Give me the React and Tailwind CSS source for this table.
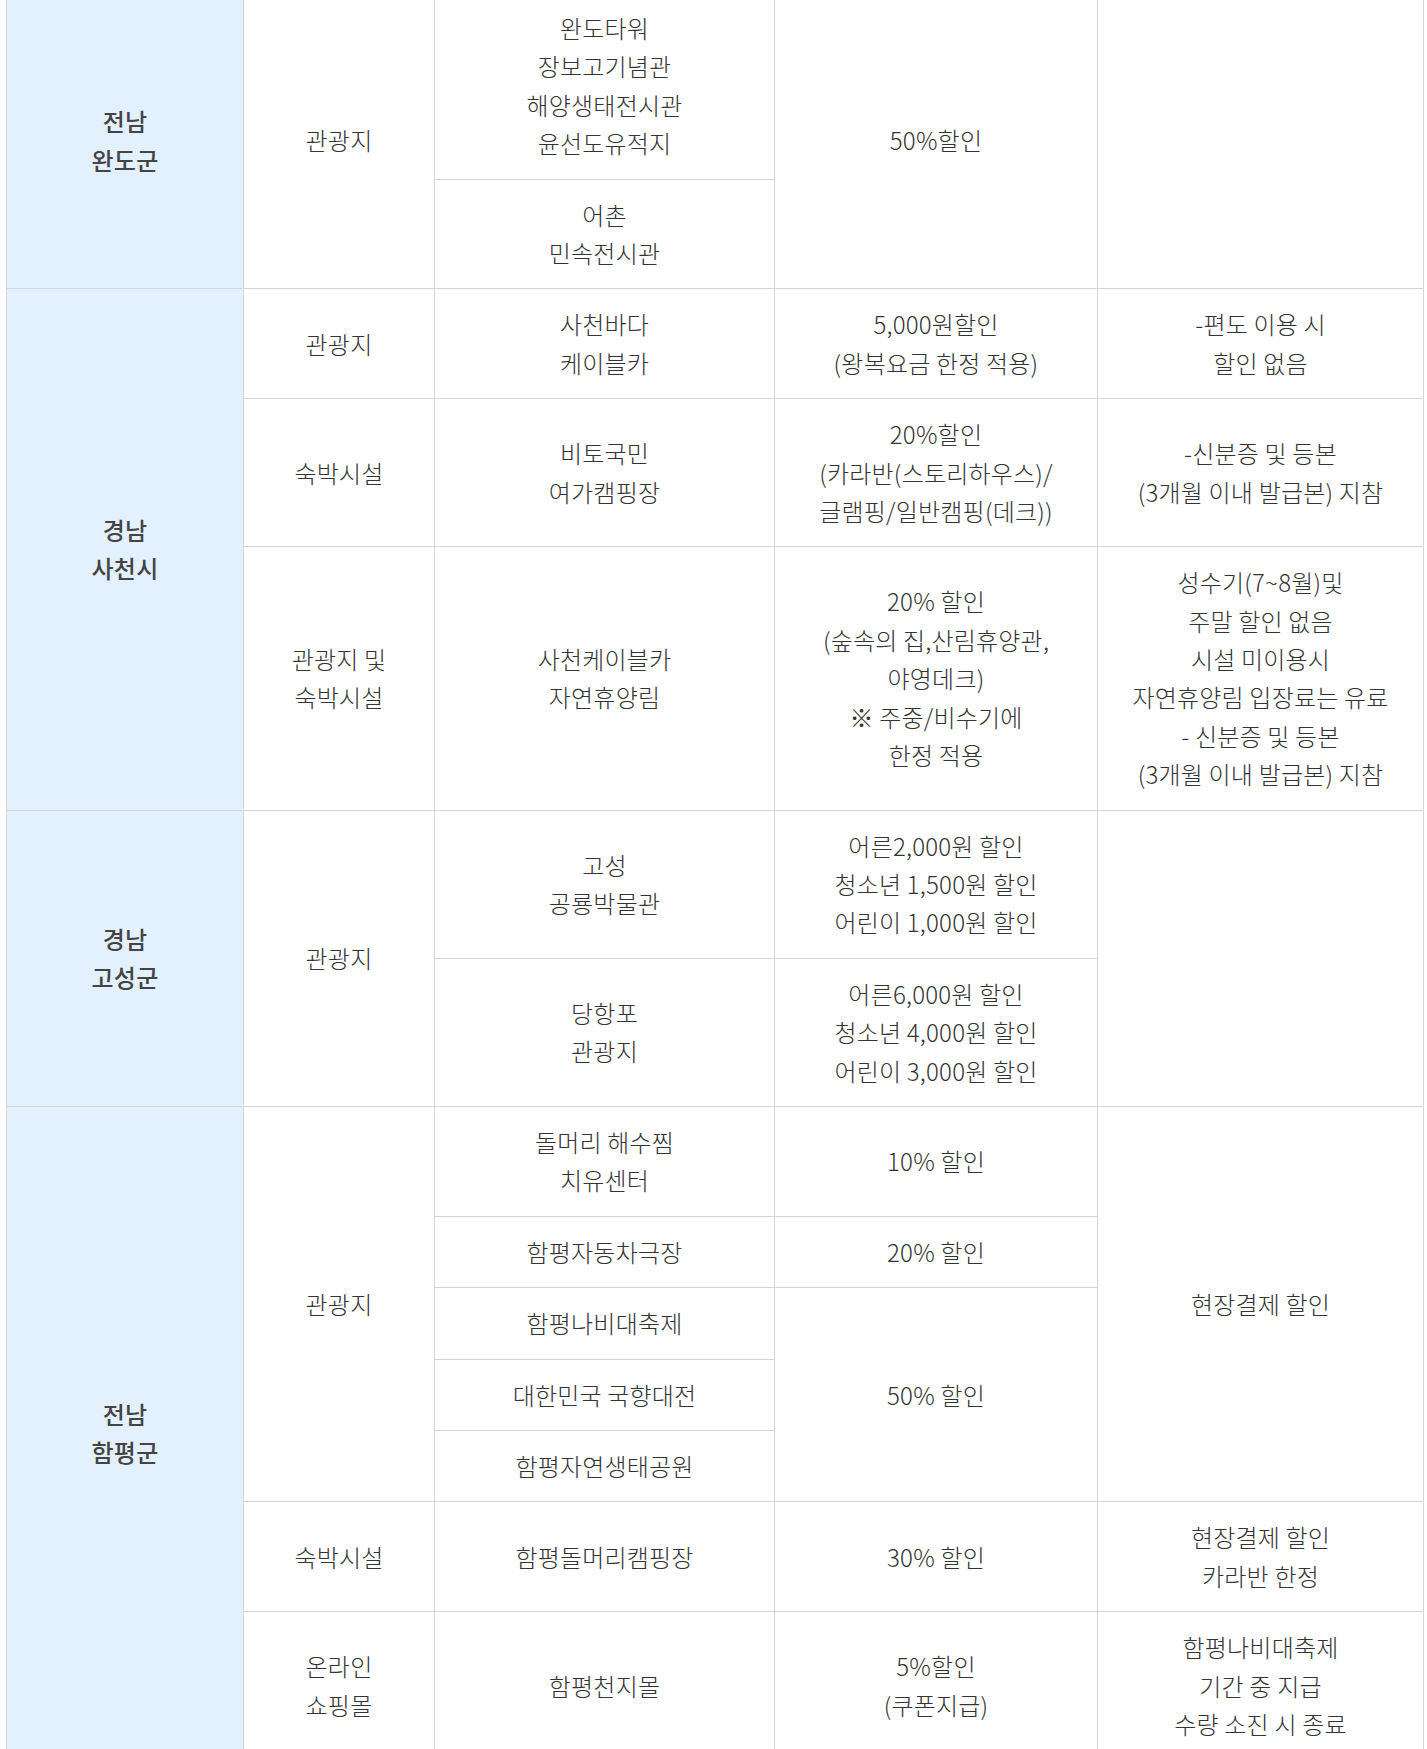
import React from 'react';

// Partner discount table (region / category / place / benefit / note)
const td = 'border border-[#d5d5d5] px-3 py-4 text-center align-middle';
const th = 'border border-[#d5d5d5] bg-[#e3f0fd] px-3 py-4 text-center align-middle font-medium text-[#444]';

const Lines = ({ items }) => (
    <>
        {items.map((line, i) => (
            <React.Fragment key={i}>
                {i > 0 && <br />}
                {line}
            </React.Fragment>
        ))}
    </>
);

const Cell = ({ lines, rowSpan }) => (
    <td className={td} rowSpan={rowSpan}>
        {lines && <Lines items={lines} />}
    </td>
);

const Region = ({ lines, rowSpan }) => (
    <th className={th} rowSpan={rowSpan} scope="row">
        <Lines items={lines} />
    </th>
);

export default function App() {
    return (
        <div className="bg-white min-h-screen overflow-hidden">
            <div className="-mt-[8px] ml-[6px] w-[1417px]">
                <table
                    className="w-full table-fixed border-collapse text-[24px] leading-[1.6] font-light text-[#333] tracking-[0.2px]"
                    style={{ fontFamily: '"Noto Sans CJK KR", "Noto Sans", sans-serif' }}
                >
                    <colgroup>
                        <col className="w-[237px]" />
                        <col className="w-[191px]" />
                        <col className="w-[340px]" />
                        <col className="w-[323px]" />
                        <col className="w-[326px]" />
                    </colgroup>
                    <tbody>
                        {/* 전남 완도군 */}
                        <tr>
                            <Region lines={['전남', '완도군']} rowSpan={2} />
                            <Cell lines={['관광지']} rowSpan={2} />
                            <Cell lines={['완도타워', '장보고기념관', '해양생태전시관', '윤선도유적지']} />
                            <Cell lines={['50%할인']} rowSpan={2} />
                            <Cell rowSpan={2} />
                        </tr>
                        <tr>
                            <Cell lines={['어촌', '민속전시관']} />
                        </tr>

                        {/* 경남 사천시 */}
                        <tr>
                            <Region lines={['경남', '사천시']} rowSpan={3} />
                            <Cell lines={['관광지']} />
                            <Cell lines={['사천바다', '케이블카']} />
                            <Cell lines={['5,000원할인', '(왕복요금 한정 적용)']} />
                            <Cell lines={['-편도 이용 시', '할인 없음']} />
                        </tr>
                        <tr>
                            <Cell lines={['숙박시설']} />
                            <Cell lines={['비토국민', '여가캠핑장']} />
                            <Cell lines={['20%할인', '(카라반(스토리하우스)/', '글램핑/일반캠핑(데크))']} />
                            <Cell lines={['-신분증 및 등본', '(3개월 이내 발급본) 지참']} />
                        </tr>
                        <tr>
                            <Cell lines={['관광지 및', '숙박시설']} />
                            <Cell lines={['사천케이블카', '자연휴양림']} />
                            <Cell lines={['20% 할인', '(숲속의 집,산림휴양관,', '야영데크)', '※ 주중/비수기에', '한정 적용']} />
                            <Cell
                                lines={[
                                    '성수기(7~8월)및',
                                    '주말 할인 없음',
                                    '시설 미이용시',
                                    '자연휴양림 입장료는 유료',
                                    '- 신분증 및 등본',
                                    '(3개월 이내 발급본) 지참',
                                ]}
                            />
                        </tr>

                        {/* 경남 고성군 */}
                        <tr>
                            <Region lines={['경남', '고성군']} rowSpan={2} />
                            <Cell lines={['관광지']} rowSpan={2} />
                            <Cell lines={['고성', '공룡박물관']} />
                            <Cell lines={['어른2,000원 할인', '청소년 1,500원 할인', '어린이 1,000원 할인']} />
                            <Cell rowSpan={2} />
                        </tr>
                        <tr>
                            <Cell lines={['당항포', '관광지']} />
                            <Cell lines={['어른6,000원 할인', '청소년 4,000원 할인', '어린이 3,000원 할인']} />
                        </tr>

                        {/* 전남 함평군 */}
                        <tr>
                            <Region lines={['전남', '함평군']} rowSpan={7} />
                            <Cell lines={['관광지']} rowSpan={5} />
                            <Cell lines={['돌머리 해수찜', '치유센터']} />
                            <Cell lines={['10% 할인']} />
                            <Cell lines={['현장결제 할인']} rowSpan={5} />
                        </tr>
                        <tr>
                            <Cell lines={['함평자동차극장']} />
                            <Cell lines={['20% 할인']} />
                        </tr>
                        <tr>
                            <Cell lines={['함평나비대축제']} />
                            <Cell lines={['50% 할인']} rowSpan={3} />
                        </tr>
                        <tr>
                            <Cell lines={['대한민국 국향대전']} />
                        </tr>
                        <tr>
                            <Cell lines={['함평자연생태공원']} />
                        </tr>
                        <tr>
                            <Cell lines={['숙박시설']} />
                            <Cell lines={['함평돌머리캠핑장']} />
                            <Cell lines={['30% 할인']} />
                            <Cell lines={['현장결제 할인', '카라반 한정']} />
                        </tr>
                        <tr>
                            <Cell lines={['온라인', '쇼핑몰']} />
                            <Cell lines={['함평천지몰']} />
                            <Cell lines={['5%할인', '(쿠폰지급)']} />
                            <Cell lines={['함평나비대축제', '기간 중 지급', '수량 소진 시 종료']} />
                        </tr>
                    </tbody>
                </table>
            </div>
        </div>
    );
}
